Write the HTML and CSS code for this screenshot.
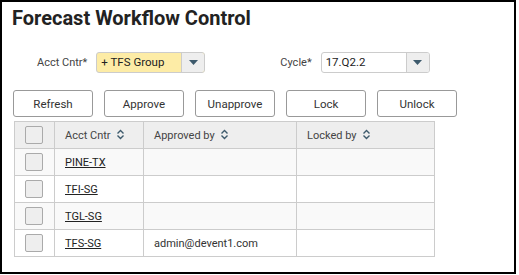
FILE: index.html
```html
<!DOCTYPE html>
<html lang="en">
<head>
    <meta charset="UTF-8">
    <title>Forecast Workflow Control</title>
    <link rel="stylesheet" href="styles.css">
</head>
<body>
<div class="panel">
    <h1>Forecast Workflow Control</h1>

    <!-- Filtros -->
    <div class="filters">
        <div class="field">
            <label>Acct Cntr*</label>
            <div class="select select-acct">
                <span class="select-value">+ TFS Group</span>
                <span class="select-btn"><svg width="9" height="5" viewBox="0 0 9 5"><path d="M0 0h9L4.5 5z" fill="#3d5a6c"/></svg></span>
            </div>
        </div>
        <div class="field">
            <label>Cycle*</label>
            <div class="select select-cycle">
                <span class="select-value">17.Q2.2</span>
                <span class="select-btn"><svg width="9" height="5" viewBox="0 0 9 5"><path d="M0 0h9L4.5 5z" fill="#3d5a6c"/></svg></span>
            </div>
        </div>
    </div>

    <!-- Ações -->
    <div class="actions">
        <button>Refresh</button>
        <button>Approve</button>
        <button>Unapprove</button>
        <button>Lock</button>
        <button>Unlock</button>
    </div>

    <table>
        <thead>
            <tr>
                <th class="col-check"><span class="check"></span></th>
                <th class="col-acct">Acct Cntr <svg class="sort" width="9" height="11" viewBox="0 0 9 11"><path d="M1.5 4.5L4.5 1.5L7.5 4.5M1.5 6.5L4.5 9.5L7.5 6.5" fill="none" stroke="#3d5a6c" stroke-width="1.4"/></svg></th>
                <th class="col-appr">Approved by <svg class="sort" width="9" height="11" viewBox="0 0 9 11"><path d="M1.5 4.5L4.5 1.5L7.5 4.5M1.5 6.5L4.5 9.5L7.5 6.5" fill="none" stroke="#3d5a6c" stroke-width="1.4"/></svg></th>
                <th>Locked by <svg class="sort" width="9" height="11" viewBox="0 0 9 11"><path d="M1.5 4.5L4.5 1.5L7.5 4.5M1.5 6.5L4.5 9.5L7.5 6.5" fill="none" stroke="#3d5a6c" stroke-width="1.4"/></svg></th>
            </tr>
        </thead>
        <tbody>
            <tr>
                <td class="col-check"><span class="check"></span></td>
                <td><a href="#">PINE-TX</a></td>
                <td></td>
                <td></td>
            </tr>
            <tr>
                <td class="col-check"><span class="check"></span></td>
                <td><a href="#">TFI-SG</a></td>
                <td></td>
                <td></td>
            </tr>
            <tr>
                <td class="col-check"><span class="check"></span></td>
                <td><a href="#">TGL-SG</a></td>
                <td></td>
                <td></td>
            </tr>
            <tr>
                <td class="col-check"><span class="check"></span></td>
                <td><a href="#">TFS-SG</a></td>
                <td>admin@devent1.com</td>
                <td></td>
            </tr>
        </tbody>
    </table>
</div>
</body>
</html>
```

FILE: styles.css
```css
body {
    margin: 0;
    font-family: Roboto, Arial, sans-serif;
    font-size: 11px;
    color: #333;
    background: #fff;
}

.panel {
    width: 512px;
    height: 270px;
    border: 2px solid #000;
    padding: 0;
}

h1 {
    margin: 4px 0 0 10px;
    font-size: 20px;
    font-weight: bold;
    color: #222;
    line-height: 24px;
}

/* Filtros */
.filters {
    display: flex;
    align-items: center;
    gap: 75px;
    margin: 22px 0 0 35px;
}

.field {
    display: flex;
    align-items: center;
    gap: 9px;
}

.field label {
    color: #444;
}

.select {
    display: flex;
    width: 107px;
    height: 19px;
    border: 1px solid #ccc;
    border-radius: 3px;
    overflow: hidden;
}

.select-acct {
    background: #fdeca6;
}

.select-cycle {
    background: #fff;
}

.select-value {
    flex: 1;
    line-height: 19px;
    padding-left: 4px;
    color: #222;
    font-size: 11.5px;
}

.select-btn {
    width: 22px;
    border-left: 1px solid #ccc;
    background: #eeeeee;
    display: flex;
    align-items: center;
    justify-content: center;
}

/* Botões */
.actions {
    display: flex;
    gap: 11px;
    margin: 17px 0 0 11px;
}

.actions button {
    width: 80px;
    height: 27px;
    background: #fff;
    border: 1px solid #999;
    border-radius: 3px;
    font-family: inherit;
    font-size: 11.5px;
    color: #333;
    padding: 0;
}

/* Tabela */
table {
    width: 421px;
    margin: 4px 0 0 12px;
    border-collapse: collapse;
}

th, td {
    border: 1px solid #ccc;
    height: 26px;
    padding: 0 10px;
    text-align: left;
    font-weight: normal;
}

th {
    background: #eeeeee;
    color: #444;
}

tbody tr:nth-child(odd) td {
    background: #f9f9f9;
}

tbody tr:nth-child(even) td {
    background: #fff;
}

.col-check {
    width: 29px;
    padding: 0 0 0 10px;
}

.col-acct {
    width: 68px;
}

.col-appr {
    width: 132px;
}

.check {
    display: block;
    width: 16px;
    height: 16px;
    background: #eeeeee;
    border: 1px solid #aaa;
    border-radius: 2px;
}

.sort {
    vertical-align: -1px;
    margin-left: 3px;
}

td a {
    color: #222;
}
```
